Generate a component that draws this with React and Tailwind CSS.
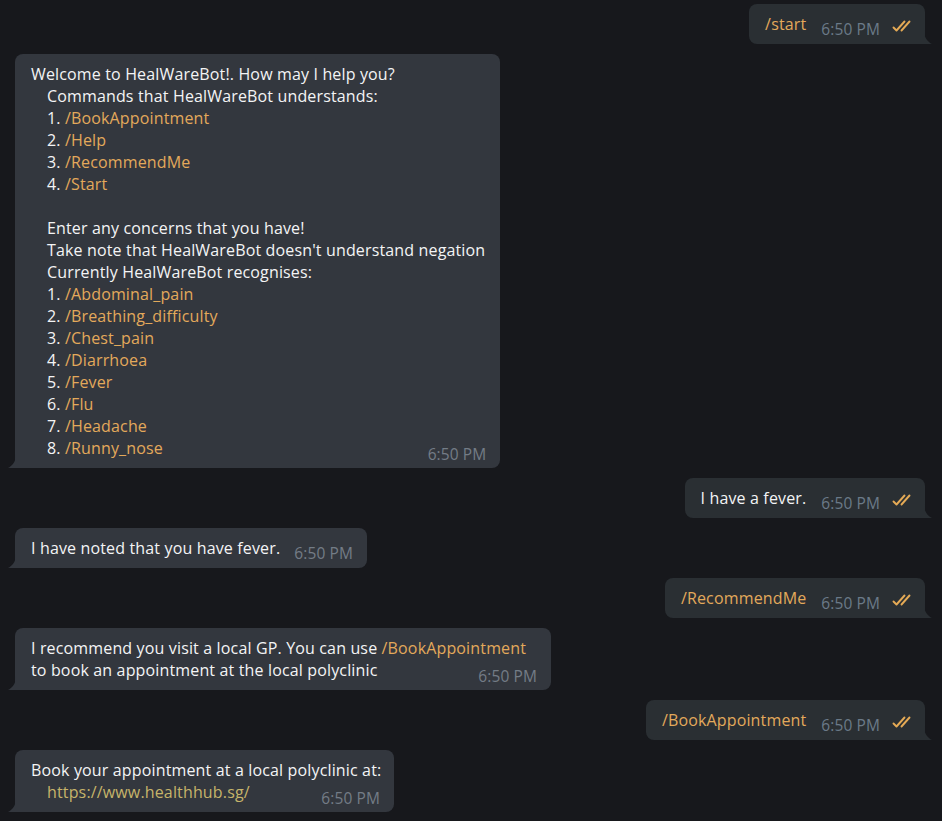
import React from "react";

const Checks = () => (
  <svg width="21" height="12" viewBox="0 0 21 12" fill="none" className="block">
    <path d="M1.5 7.5 L4.5 10.5 L12.5 1.5" stroke="#e5aa55" strokeWidth="1.9" strokeLinecap="round" strokeLinejoin="round" />
    <path d="M9.5 10.5 L17.5 1.5" stroke="#e5aa55" strokeWidth="1.9" strokeLinecap="round" strokeLinejoin="round" />
  </svg>
);

const TailLeft = () => (
  <svg width="9" height="14" viewBox="0 0 9 14" className="absolute bottom-0 left-[-7px]">
    <path d="M8 0 L8 14 L0 14 C4 12 8 8 8 0 Z" fill="#33373e" />
  </svg>
);

const TailRight = () => (
  <svg width="9" height="14" viewBox="0 0 9 14" className="absolute bottom-0 right-[-7px]">
    <path d="M1 0 L1 14 L9 14 C5 12 1 8 1 0 Z" fill="#2a2f33" />
  </svg>
);

const Time = ({ out }) => (
  <span
    className={`block text-[15.5px] leading-none tracking-[0.1px] translate-y-[2px] ${
      out ? "text-[#6b7a88]" : "text-[#737c86]"
    }`}
  >
    6:50 PM
  </span>
);

const Cmd = ({ children }) => <span className="text-[#e3a95b]">{children}</span>;

const Outgoing = ({ children, plain }) => (
  <div className="self-end mr-[17px] relative bg-[#2a2f33] rounded-[8px] rounded-br-none pl-[16px] pr-[12px] pt-[9px] pb-[9px] flex items-end">
    <span className={plain ? "" : "text-[#e3a95b]"}>{children}</span>
    <span className="ml-[15px] shrink-0">
      <Time out />
    </span>
    <span className="ml-[12px] mb-[3px] shrink-0">
      <Checks />
    </span>
    <TailRight />
  </div>
);

const IncomingShort = ({ children }) => (
  <div className="self-start ml-[15px] relative bg-[#33373e] rounded-[8px] rounded-bl-none pl-[16px] pr-[14px] pt-[9px] pb-[9px] flex items-end">
    <span>{children}</span>
    <span className="ml-[14px] shrink-0">
      <Time />
    </span>
    <TailLeft />
  </div>
);

const IncomingLong = ({ children, width }) => (
  <div className={`self-start ml-[15px] relative bg-[#33373e] rounded-[8px] rounded-bl-none pl-[16px] pr-[15px] pt-[9px] pb-[9px] ${width || ""}`}>
    {children}
    <span className="absolute right-[14px] bottom-[6px] text-[15.5px] leading-none tracking-[0.1px] text-[#737c86]">
      6:50 PM
    </span>
    <TailLeft />
  </div>
);

const Ind = ({ children }) => <div className="pl-[16px] whitespace-pre">{children}</div>;

export default function App() {
  return (
    <div
      className="w-[942px] h-[821px] overflow-hidden bg-[#17181c] text-[#f3f4f5] text-[16px] leading-[22px] tracking-[0.15px] flex flex-col gap-[10px] pt-[4px]"
      style={{ fontFamily: "'Open Sans', sans-serif" }}
    >
      <Outgoing>/start</Outgoing>

      <IncomingLong>
        <div className="whitespace-pre">Welcome to HealWareBot!. How may I help you?</div>
        <Ind>Commands that HealWareBot understands:</Ind>
        <Ind>1. <Cmd>/BookAppointment</Cmd></Ind>
        <Ind>2. <Cmd>/Help</Cmd></Ind>
        <Ind>3. <Cmd>/RecommendMe</Cmd></Ind>
        <Ind>4. <Cmd>/Start</Cmd></Ind>
        <div className="h-[22px]" />
        <Ind>Enter any concerns that you have!</Ind>
        <Ind>Take note that HealWareBot doesn't understand negation</Ind>
        <Ind>Currently HealWareBot recognises:</Ind>
        <Ind>1. <Cmd>/Abdominal_pain</Cmd></Ind>
        <Ind>2. <Cmd>/Breathing_difficulty</Cmd></Ind>
        <Ind>3. <Cmd>/Chest_pain</Cmd></Ind>
        <Ind>4. <Cmd>/Diarrhoea</Cmd></Ind>
        <Ind>5. <Cmd>/Fever</Cmd></Ind>
        <Ind>6. <Cmd>/Flu</Cmd></Ind>
        <Ind>7. <Cmd>/Headache</Cmd></Ind>
        <Ind>8. <Cmd>/Runny_nose</Cmd></Ind>
      </IncomingLong>

      <Outgoing plain>I have a fever.</Outgoing>

      <IncomingShort>I have noted that you have fever.</IncomingShort>

      <Outgoing>/RecommendMe</Outgoing>

      <IncomingLong width="w-[536px]">
        <div className="whitespace-pre">
          I recommend you visit a local GP. You can use <Cmd>/BookAppointment</Cmd>
        </div>
        <div className="whitespace-pre">to book an appointment at the local polyclinic</div>
      </IncomingLong>

      <Outgoing>/BookAppointment</Outgoing>

      <IncomingLong width="w-[379px]">
        <div className="whitespace-pre">Book your appointment at a local polyclinic at:</div>
        <Ind>
          <span className="text-[#c6b46a]">https://www.healthhub.sg/</span>
        </Ind>
      </IncomingLong>
    </div>
  );
}
